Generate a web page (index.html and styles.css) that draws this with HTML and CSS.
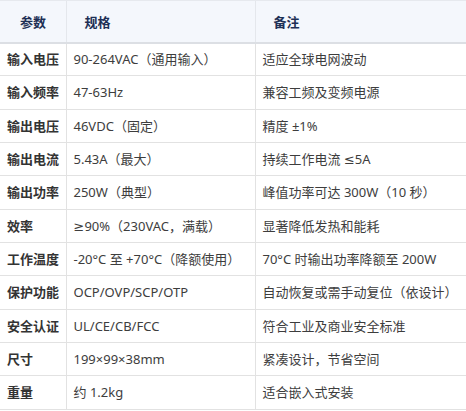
FILE: index.html
```
<!DOCTYPE html>
<html lang="zh-CN">
<head>
<meta charset="utf-8">
<link rel="stylesheet" href="styles.css">
</head>
<body>
<table class="spec">
  <colgroup>
    <col class="c1"><col class="c2"><col class="c3">
  </colgroup>
  <thead>
    <tr><th class="h1">参数</th><th>规格</th><th>备注</th></tr>
  </thead>
  <tbody>
    <tr><td class="k">输入电压</td><td>90-264VAC（通用输入）</td><td>适应全球电网波动</td></tr>
    <tr><td class="k">输入频率</td><td>47-63Hz</td><td>兼容工频及变频电源</td></tr>
    <tr><td class="k">输出电压</td><td>46VDC（固定）</td><td>精度 ±1%</td></tr>
    <tr><td class="k">输出电流</td><td>5.43A（最大）</td><td>持续工作电流 ≤5A</td></tr>
    <tr><td class="k">输出功率</td><td>250W（典型）</td><td>峰值功率可达 300W（10 秒）</td></tr>
    <tr><td class="k">效率</td><td>≥90%（230VAC，满载）</td><td>显著降低发热和能耗</td></tr>
    <tr><td class="k">工作温度</td><td>-20°C 至 +70°C（降额使用）</td><td>70°C 时输出功率降额至 200W</td></tr>
    <tr><td class="k">保护功能</td><td>OCP/OVP/SCP/OTP</td><td>自动恢复或需手动复位（依设计）</td></tr>
    <tr><td class="k">安全认证</td><td>UL/CE/CB/FCC</td><td>符合工业及商业安全标准</td></tr>
    <tr><td class="k">尺寸</td><td>199×99×38mm</td><td>紧凑设计，节省空间</td></tr>
    <tr><td class="k">重量</td><td>约 1.2kg</td><td>适合嵌入式安装</td></tr>
  </tbody>
</table>
</body>
</html>
```
FILE: styles.css
```
html, body {
  margin: 0;
  padding: 0;
  background: #ffffff;
}
body {
  font-family: "Noto Sans", "DejaVu Sans", "Noto Sans CJK SC", sans-serif;
  font-size: 13px;
  color: #3d3d3d;
}
.spec {
  border-collapse: collapse;
  width: 466px;
  table-layout: fixed;
}
.c1 { width: 66px; }
.c2 { width: 189px; }
.c3 { width: 211px; }
.spec th {
  background: #f4f7fc;
  color: #1d2f55;
  font-weight: 700;
  text-align: left;
  height: 42px;
  padding: 0 18px;
  border-top: 1px solid #e6e9ee;
  border-bottom: 2px solid #dcdfe4;
  border-left: 1px solid #e4e7ec;
  box-sizing: border-box;
}
.spec th.h1 {
  border-left: none;
  padding: 0 0 0 20px;
}
.spec td {
  height: 33.33px;
  padding: 0 7px;
  border-bottom: 1px solid #e2e2e2;
  border-left: 1px solid #e2e2e2;
  white-space: nowrap;
  overflow: hidden;
  line-height: 20px;
  box-sizing: border-box;
}
.spec td.k {
  border-left: none;
  font-weight: 700;
  color: #333333;
}
.spec th:last-child, .spec td:last-child {
  border-right: 1px solid #e8e8e8;
}
```
